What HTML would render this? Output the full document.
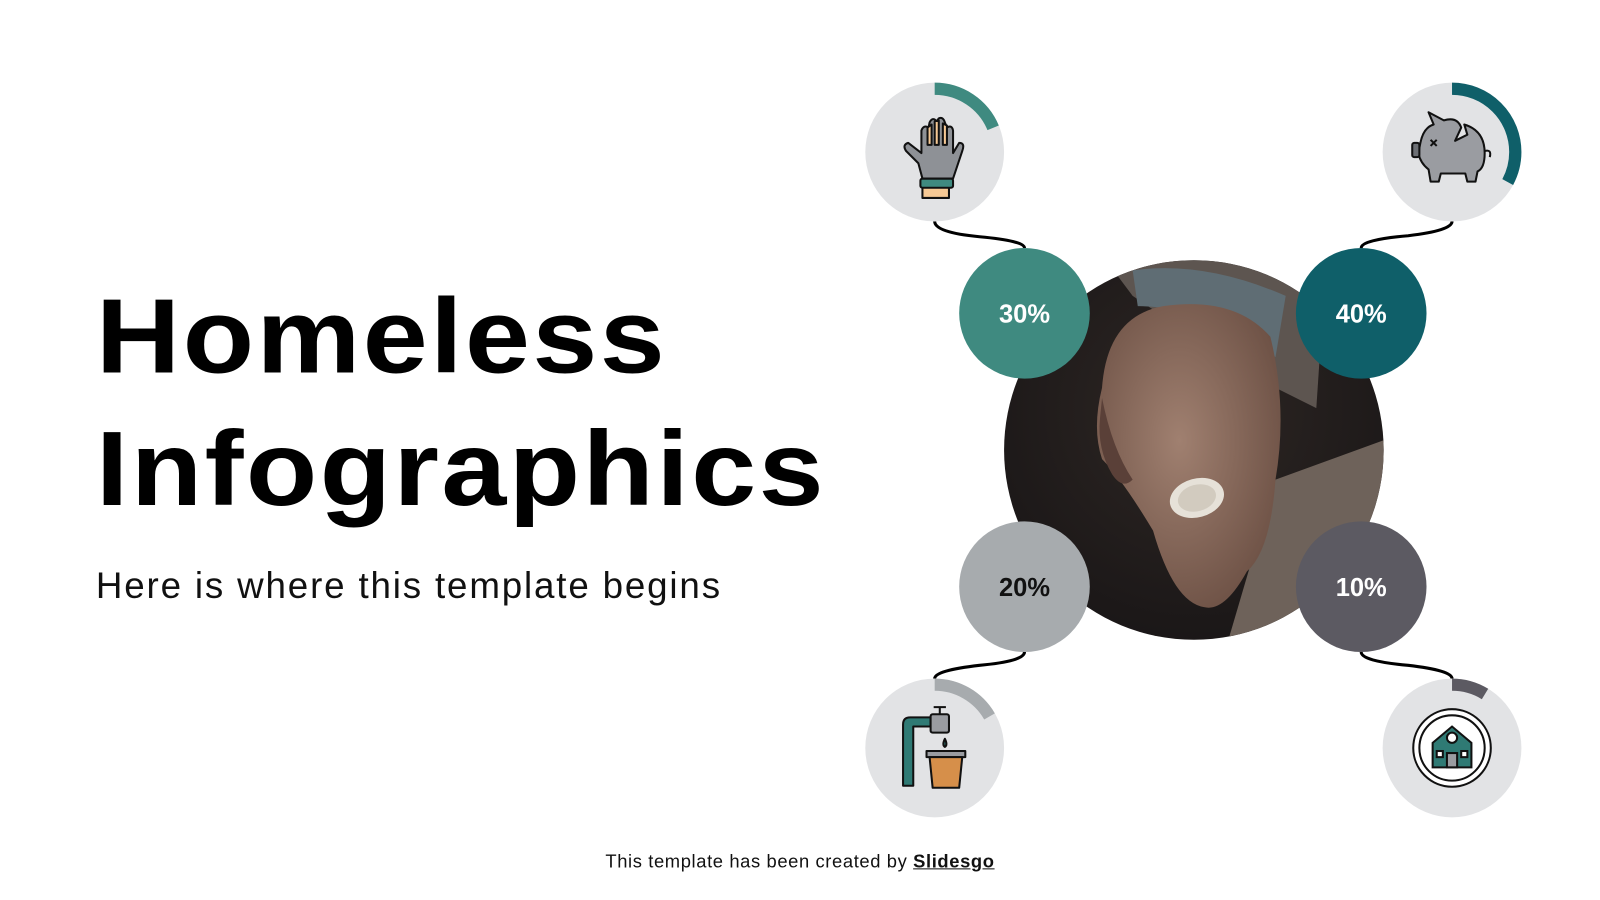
<!DOCTYPE html>
<html><head><meta charset="utf-8"><style>
html,body{margin:0;padding:0;background:#fff;}
body{width:1600px;height:900px;position:relative;overflow:hidden;font-family:"Liberation Sans",sans-serif;}
#w{position:absolute;left:0;top:0;width:1568px;height:882px;transform:scale(1.0204);transform-origin:0 0;}
.t{position:absolute;left:94px;font-weight:bold;font-size:104px;color:#000;line-height:1;letter-spacing:2.2px;transform:scaleX(1.1);transform-origin:0 0;white-space:nowrap;}
.sub{position:absolute;left:94px;top:553px;font-size:36px;color:#111;letter-spacing:1.8px;}
.foot{position:absolute;left:0;width:1568px;top:834px;text-align:center;font-size:18px;color:#111;letter-spacing:0.6px;}
.foot b{text-decoration:underline;}
svg{position:absolute;left:0;top:0;}
</style></head><body><div id="w">
<div class="t" style="top:278px">Homeless</div>
<div class="t" style="top:408px">Infographics</div>
<div class="sub">Here is where this template begins</div>
<div class="foot">This template has been created by <b>Slidesgo</b></div>
<svg width="1568" height="882" viewBox="0 0 1568 882">
<defs>
<clipPath id="pc"><circle cx="1170" cy="441" r="186"/></clipPath>
<radialGradient id="bg" cx="0.5" cy="0.4" r="0.7"><stop offset="0" stop-color="#2e2724"/><stop offset="1" stop-color="#171415"/></radialGradient>
<radialGradient id="sk" cx="0.45" cy="0.45" r="0.6"><stop offset="0" stop-color="#a08070"/><stop offset="1" stop-color="#6e5246"/></radialGradient>
</defs>
<g clip-path="url(#pc)">
<rect x="980" y="250" width="380" height="380" fill="url(#bg)"/>
<path d="M1250 470 L1360 430 L1360 640 L1200 640 Z" fill="#6e625a"/>
<path d="M1080 250 L1300 250 L1290 400 L1230 370 L1110 290 Z" fill="#5d5550"/>
<path d="M1110 265 Q1180 255 1260 290 L1250 350 Q1180 300 1115 300 Z" fill="#5f6d74"/>
<path d="M1080 380 Q1085 310 1140 300 Q1210 290 1245 330 Q1262 400 1250 470 Q1245 540 1222 560 Q1200 600 1180 595 Q1150 590 1130 520 Q1100 470 1080 450 Q1070 420 1080 380 Z" fill="url(#sk)"/>
<path d="M1080 390 Q1090 440 1110 470 Q1100 480 1090 465 Q1075 440 1078 410Z" fill="#5a4038"/>
<ellipse cx="1173" cy="488" rx="27" ry="19" fill="#e6e1d8" transform="rotate(-15 1173 488)"/>
<ellipse cx="1173" cy="488" rx="19" ry="13" fill="#d2cbbf" transform="rotate(-15 1173 488)"/>
</g>
<g fill="none" stroke="#000" stroke-width="3">
<path d="M916 217 Q916 228 960 232 Q1004 236 1004 243"/>
<path d="M1423 217 Q1423 226 1380 231 Q1334 235 1334 243"/>
<path d="M1004 639 Q1004 648 960 652 Q916 657 916 665"/>
<path d="M1334 639 Q1334 648 1380 652 Q1423 657 1423 665"/>
</g>
<circle cx="916" cy="149" r="68" fill="#e2e3e5"/>
<circle cx="1423" cy="149" r="68" fill="#e2e3e5"/>
<circle cx="916" cy="733" r="68" fill="#e2e3e5"/>
<circle cx="1423" cy="733" r="68" fill="#e2e3e5"/>
<g fill="none" stroke-width="12">
<circle cx="916" cy="149" r="62" stroke="#3f8a80" stroke-dasharray="73 400" transform="rotate(-90 916 149)"/>
<circle cx="1423" cy="149" r="62" stroke="#0f5f69" stroke-dasharray="128 400" transform="rotate(-90 1423 149)"/>
<circle cx="916" cy="733" r="62" stroke="#a7abae" stroke-dasharray="65 400" transform="rotate(-90 916 733)"/>
<circle cx="1423" cy="733" r="62" stroke="#5c5a62" stroke-dasharray="34 400" transform="rotate(-90 1423 733)"/>
</g>
<circle cx="1004" cy="307" r="64" fill="#3f8a80"/>
<circle cx="1334" cy="307" r="64" fill="#0f5f69"/>
<circle cx="1004" cy="575" r="64" fill="#a7abae"/>
<circle cx="1334" cy="575" r="64" fill="#5c5a62"/>
<g font-family="Liberation Sans, sans-serif" font-weight="bold" font-size="25" text-anchor="middle">
<text x="1004" y="316" fill="#fff">30%</text>
<text x="1334" y="316" fill="#fff">40%</text>
<text x="1004" y="584" fill="#111">20%</text>
<text x="1334" y="584" fill="#fff">10%</text>
</g>
<g stroke="#111" stroke-width="2" stroke-linejoin="round">
<rect x="904" y="182" width="26" height="12" fill="#f6c995"/>
<rect x="902" y="175" width="32" height="9" rx="2" fill="#3f8a80"/>
<path d="M904 175 L900 160 L888 148 Q884 142 890 140 L903 150 L903 128 Q905 122 910 125 L911 120 Q914 114 918 119 L920 116 Q924 114 926 120 L928 125 Q933 122 934 128 L934 150 L940 140 Q946 140 943 148 L934 175 Z" fill="#8e9196"/>
<path d="M909 125 L909 142 L913 142 L913 122 Z M916 119 L916 142 L920 142 L920 118Z M924 121 L924 142 L928 142 L928 123Z" fill="#f6c995"/>
</g>
<g stroke="#111" stroke-width="2" stroke-linejoin="round">
<path d="M1392 140 Q1395 125 1405 122 L1400 110 L1415 118 Q1428 114 1432 125 L1426 138 L1438 132 L1435 122 Q1455 128 1455 150 Q1455 165 1448 168 L1446 178 L1438 178 L1436 170 L1412 170 L1410 178 L1402 178 L1400 166 Q1392 160 1390 150 Z" fill="#9a9ca1"/>
<rect x="1384" y="140" width="7" height="14" rx="2" fill="#6c6f74"/>
<path d="M1455 148 Q1462 146 1460 154" fill="none"/>
<path d="M1402 137 L1408 143 M1408 137 L1402 143" fill="none"/>
</g>
<g stroke="#111" stroke-width="2" stroke-linejoin="round">
<path d="M885 770 L885 710 Q885 703 892 703 L912 703 L912 712 L895 712 L895 770 Z" fill="#2f7a74"/>
<rect x="912" y="700" width="18" height="18" rx="2" fill="#9a9ca1"/>
<path d="M921 700 L921 693 M915 693 L927 693" fill="none"/>
<path d="M926 724 Q923 730 926 732 Q929 730 926 724Z" fill="#2f7a74"/>
<rect x="908" y="736" width="38" height="6" fill="#9a9ca1"/>
<path d="M911 742 L943 742 L940 772 L914 772 Z" fill="#d68f4a"/>
</g>
<g stroke="#111" stroke-width="2">
<circle cx="1423" cy="733" r="38" fill="#fff"/>
<circle cx="1423" cy="733" r="32" fill="none"/>
<path d="M1404 728 L1423 712 L1442 728 L1442 752 L1404 752 Z" fill="#2f7a74"/>
<rect x="1418" y="738" width="10" height="14" fill="#9a9ca1"/>
<rect x="1408" y="736" width="6" height="6" fill="#fff"/>
<rect x="1432" y="736" width="6" height="6" fill="#fff"/>
<circle cx="1423" cy="723" r="5" fill="#fff"/>
</g>
</svg>
</div></body></html>
